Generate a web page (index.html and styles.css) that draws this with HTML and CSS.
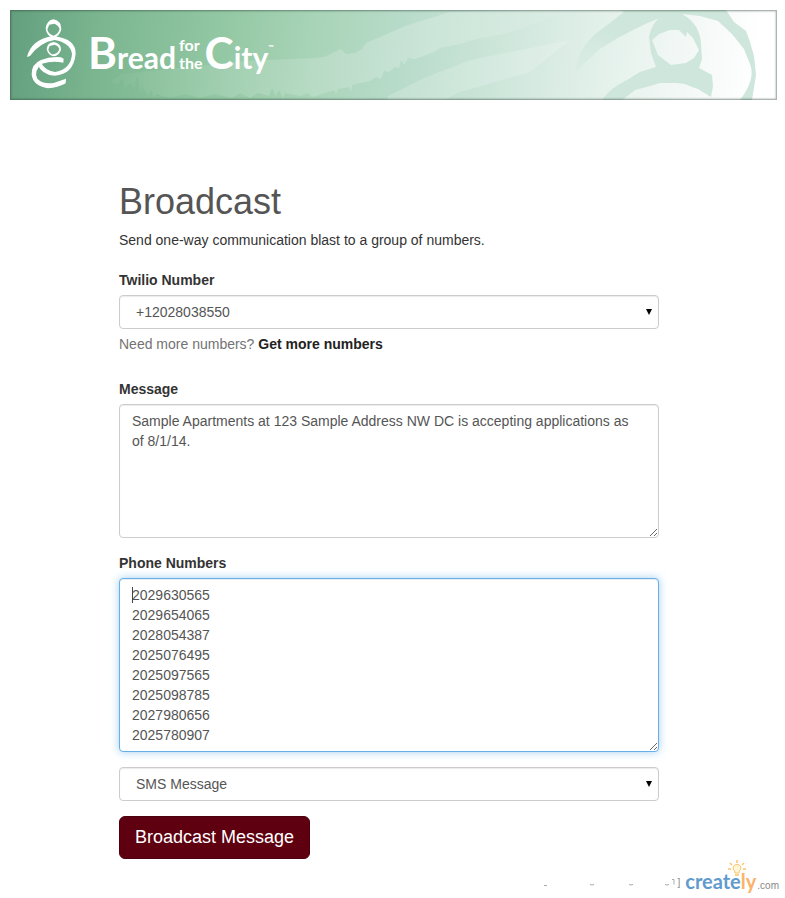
FILE: index.html
```html
<!DOCTYPE html>
<html lang="en">
<head>
<meta charset="utf-8">
<title>Broadcast - Bread for the City</title>
<link rel="stylesheet" href="styles.css">
</head>
<body>
<header class="banner">
  <svg class="banner-art" viewBox="0 0 767 90" preserveAspectRatio="none" aria-hidden="true">
    <defs>
      <linearGradient id="stroke-fade" x1="0" x2="1" y1="0" y2="0">
        <stop offset="0" stop-color="#fff" stop-opacity=".04"/>
        <stop offset=".35" stop-color="#fff" stop-opacity=".15"/>
        <stop offset=".7" stop-color="#fff" stop-opacity=".22"/>
        <stop offset="1" stop-color="#fff" stop-opacity=".05"/>
      </linearGradient>
      <linearGradient id="arm-fade" x1="0" x2="1" y1="1" y2="0">
        <stop offset="0" stop-color="#cee6db" stop-opacity=".2"/>
        <stop offset=".5" stop-color="#cee6db"/>
      </linearGradient>
    </defs>
    <path fill="url(#stroke-fade)" d="M235 51 L304 48 L314 47 L331 39 L336 44 L345 43 L352 39 L356 33 L398 15 L440 2 L560 0 L510 19 L490 25 L470 28 L450 34 L430 38 L424 42 L405 49 L398 48 L394 55 L391 50 L389 58 L385 57 L379 62 L374 61 L371 69 L366 67 L360 71 L350 73 L342 75 L341 82 L339 77 L328 79 L326 84 L324 80 L312 84 L302 87 L298 83 L290 86 L275 83 L273 88 L269 80 L266 86 L262 78 L259 86 L248 83 L240 88 L230 83 L222 88 L205 84 L190 88 L175 84 L160 88 L146 84 L144 88 L141 80 L138 86 L132 76 L131 84 L127 66 L124 78 L120 73 L115 78 L112 68 L108 74 L100 72 L112 64 Z"/>
    <path fill="#fff" opacity=".18" d="M378 86 L412 69 L460 50 L520 38 L560 30 L520 62 L450 82 L435 90 L377 90 Z"/>
    <path fill="url(#arm-fade)" d="M566 63 Q564 45 584 25 L614 2 L625 0 H690 L655 6 Q622 18 590 39 Q578 49 566 63 Z"/>
    <path fill="#cee6db" fill-rule="evenodd" d="M610 0 H716 L724 12 L736 21 L740 32 L744 46 L746 65 L742 90 H730 Q746 69 740 54 L734 39 L722 24 L708 11 L690 6 L672 4 Q690 14 691 34 L692 49 L689 58 L702 65 L703 76 L701 87 L688 79 L682 77 L675 74 L666 73 H650 L640 76 L625 80 L612 90 H592 Q600 78 617 70 L630 62 L646 57 L641 43 L639 27 Q642 11 654 5 L630 10 Z M642 30 L649 24 L660 20 H669 L676 27 L677 22 L683 28 L689 40 L684 48 L676 53 L661 55 L648 45 Z"/>
    <g fill="#fff" fill-rule="evenodd" transform="translate(10 2) scale(.3333)">
      <path d="M77 50 Q80 24 101 22 Q124 27 124 52 Q120 72 100 78 Q80 72 77 50 Z M82 52 Q86 68 101 71 Q116 65 119 50 Q116 41 104 35 L88 38 Z"/>
      <path d="M21 135 Q34 83 96 73 L105 73 Q168 82 167 125 Q161 187 104 191 Q65 189 52 155 L62 150 Q76 178 106 180 Q154 170 156 125 Q150 92 104 84 Q60 91 30 132 Z"/>
      <path d="M80 111 Q82 92 101 90 Q124 95 123 113 Q118 131 101 133 Q84 130 80 111 Z M85 113 Q90 127 101 127 Q116 122 118 110 Q115 101 104 98 L89 102 Z"/>
      <path d="M130 152 Q98 145 66 155 Q40 176 52 200 Q68 217 101 213 L138 200 L137 214 Q113 228 84 229 Q39 221 35 188 Q34 156 63 144 Q91 133 123 136 L131 140 Z"/>
    </g>
  </svg>
  <div class="brand">
    <span class="brand-word"><span class="brand-cap">B</span>read</span>
    <span class="brand-small"><span>for</span><span>the</span></span>
    <span class="brand-word"><span class="brand-cap">C</span>ity</span>
    <span class="brand-tm">™</span>
  </div>
</header>

<main class="page">
  <h1>Broadcast</h1>
  <p class="lead">Send one-way communication blast to a group of numbers.</p>
  <form>
    <div class="group group-number">
      <label for="number">Twilio Number</label>
      <div class="select-wrap">
        <select id="number" class="control"><option>+12028038550</option></select>
      </div>
      <p class="help">Need more numbers? <a href="#">Get more numbers</a></p>
    </div>
    <div class="group">
      <label for="message">Message</label>
      <textarea id="message" class="control" rows="6">Sample Apartments at 123 Sample Address NW DC is accepting applications as of 8/1/14.</textarea>
    </div>
    <div class="group">
      <label for="phones">Phone Numbers</label>
      <div class="caret-wrap">
        <textarea id="phones" class="control is-focused" rows="8">2029630565
2029654065
2028054387
2025076495
2025097565
2025098785
2027980656
2025780907</textarea>
        <span class="caret"></span>
      </div>
    </div>
    <div class="group select-wrap">
      <select class="control" aria-label="Message type"><option>SMS Message</option></select>
    </div>
    <button type="submit" class="submit">Broadcast Message</button>
  </form>
</main>

<footer class="credit">
  <svg class="remnant" width="132" height="12" viewBox="0 0 132 12" aria-hidden="true">
    <path fill="none" stroke="#aaa" d="M1 8.500h3M47 7.500q2 1 4 0M86 7.500q2 1 4 0M122 7.500q2 1 4 0M129 2.500h2v5"/>
  </svg>
  <span class="bracket">]</span>
  <a href="#" class="creately">
    <svg class="bulb" width="18" height="17" viewBox="0 0 18 17" aria-hidden="true">
      <path fill="#fff6d8" stroke="#fbc46c" d="M7 13 Q7 11 5.500 9.500 Q4 5 9 4.500 Q14 5 12.500 9.500 Q11 11 11 13 Z"/>
      <path stroke="#fbc46c" stroke-width="1.500" d="M9 0v3M2 3l2 2M16 3l-2 2M0 9h3M15 9h3M7 15h4"/>
    </svg>
    <span class="create">create</span><span class="ly">ly</span><span class="com">.com</span>
  </a>
</footer>
</body>
</html>
```
FILE: styles.css
```css
* { box-sizing: border-box; }

body {
  margin: 0;
  background: #fff;
  color: #333;
  font: 14px/20px "Liberation Sans", Arial, sans-serif;
}

.banner {
  position: relative;
  height: 90px;
  margin: 10px 8px 0 10px;
  background: linear-gradient(96deg, #639f7e 0%, #7bb690 12%, #90c6a1 26%, #a9d4b8 40%, #b9dccb 52%, #d0e7dc 65%, #e2f0ea 76%, #f3f8f6 88%, #fff 97%);
}

.banner::after {
  content: "";
  position: absolute;
  inset: 0;
  border: 1px solid rgba(50, 70, 60, .4);
  box-shadow: inset 0 0 2px rgba(50, 70, 60, .6);
}

.banner-art {
  position: absolute;
  inset: 0;
  width: 100%;
  height: 100%;
}

.brand {
  position: relative;
  display: flex;
  align-items: center;
  height: 88px;
  padding-left: 78px;
  color: #fff;
  font-family: Lato, sans-serif;
  font-weight: bold;
}

.brand-word { font-size: 30px; line-height: 50px; }
.brand-cap { font-size: 44px; }

.brand-small {
  display: flex;
  flex-direction: column;
  margin: 0 2px 0 3px;
  font-size: 16px;
  line-height: 18px;
}

.brand-tm { align-self: flex-start; margin-top: 32px; font-size: 7px; line-height: 10px; }

.page { margin: 82px 126px 0 119px; }

h1 {
  margin: 0 0 9px;
  color: #555;
  font-size: 36px;
  font-weight: normal;
  line-height: 39px;
}

.lead { margin: 0 0 20px; }

.group { margin-bottom: 15px; }
.group-number { margin-bottom: 25px; }

label {
  display: block;
  margin-bottom: 5px;
  font-weight: bold;
}

.control {
  display: block;
  width: 100%;
  padding: 6px 12px;
  border: 1px solid #ccc;
  border-radius: 4px;
  background: #fff;
  box-shadow: inset 0 1px 1px rgba(0, 0, 0, .08);
  color: #555;
  font: inherit;
}

textarea.control { padding-right: 20px; }

select.control {
  height: 34px;
  padding-left: 16px;
  appearance: none;
}

.select-wrap { position: relative; }

.select-wrap::after {
  content: "";
  position: absolute;
  top: 14px;
  right: 7px;
  border: 3px solid transparent;
  border-top: 6px solid #000;
  border-bottom: 0;
}

.is-focused {
  border-color: #66afe9;
  box-shadow: inset 0 1px 1px rgba(0, 0, 0, .08), 0 0 8px rgba(102, 175, 233, .6);
}

.caret-wrap { position: relative; }

.caret {
  position: absolute;
  top: 9px;
  left: 13px;
  width: 1px;
  height: 16px;
  background: #444;
}

.help {
  margin: 5px 0 0;
  color: #737373;
}

.help a {
  color: #222;
  font-weight: bold;
  text-decoration: none;
}

.submit {
  display: block;
  padding: 9px 15px;
  border: 1px solid #4d000d;
  border-radius: 6px;
  background: #5e000f;
  color: #fff;
  font: 18px/23px "Liberation Sans", Arial, sans-serif;
}

.credit {
  display: flex;
  justify-content: flex-end;
  align-items: center;
  height: 36px;
  margin-top: 6px;
  padding-right: 6px;
  color: #888;
}

.remnant { margin-right: 2px; }
.bracket { margin-right: 5px; font-size: 10px; }

.creately {
  position: relative;
  display: flex;
  align-items: baseline;
  text-decoration: none;
  font-family: Lato, sans-serif;
}

.create { color: #5f9bcd; font-size: 20px; font-weight: bold; }
.ly { color: #fbb36b; font-size: 20px; font-weight: bold; }
.com { margin-left: 1px; color: #888; font: 10px/20px "Liberation Sans", sans-serif; }

.bulb {
  position: absolute;
  top: -11px;
  left: 43px;
}
```
